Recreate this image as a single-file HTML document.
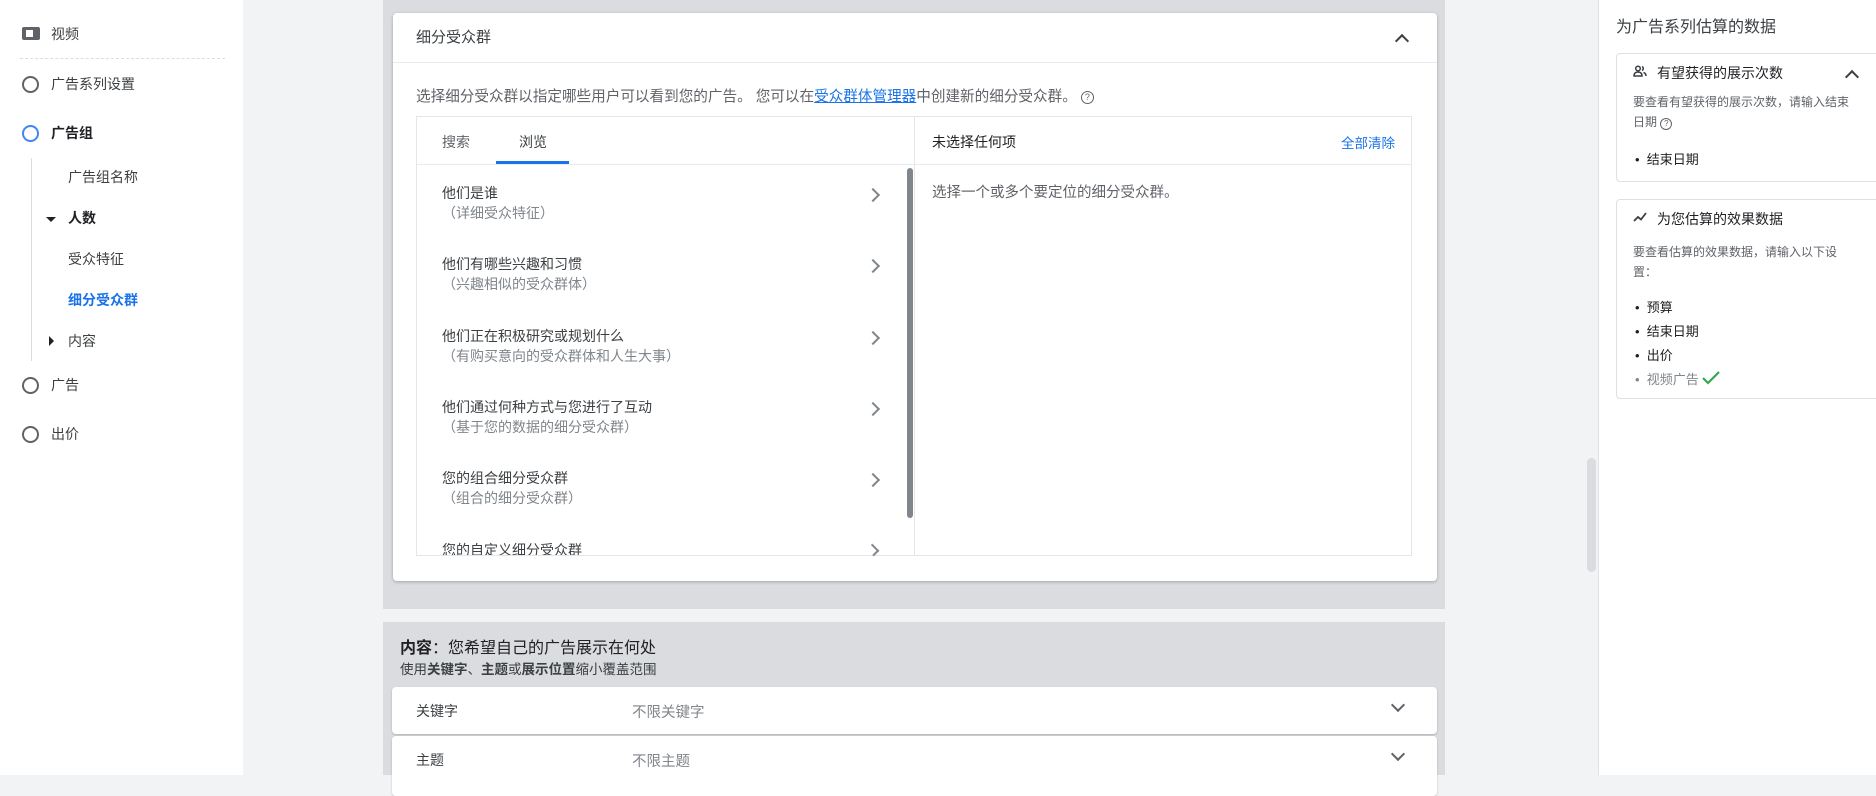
<!DOCTYPE html>
<html><head><meta charset="utf-8">
<style>
*{box-sizing:border-box;margin:0;padding:0}
body{width:1876px;height:775px;overflow:hidden;position:relative;background:#f1f3f4;font-family:"Liberation Sans","Noto Sans CJK SC",sans-serif;color:#3c4043;font-size:14px}
.a{position:absolute;white-space:nowrap}
.nav{left:0;top:0;width:243px;height:775px;background:#fff}
.circ{position:absolute;width:17px;height:17px;border:2px solid #5f6368;border-radius:50%}
.main{left:383px;top:0;width:1062px;height:609px;background:#dadce0}
.card{left:393px;top:13px;width:1044px;height:568px;background:#fff;border-radius:4px;box-shadow:0 1px 3px rgba(0,0,0,.25)}
.box{left:416px;top:116px;width:996px;height:440px;border:1px solid #e6e6e6}
.chev{position:absolute;width:10px;height:10px;border-right:2px solid #80868b;border-top:2px solid #80868b;transform:rotate(45deg)}
.t{color:#3c4043;font-size:14px}
.s{color:#80868b;font-size:14px}
.rp{left:1598px;top:0;width:278px;height:775px;background:#fff;border-left:1px solid #e0e0e0}
.rc{position:absolute;left:17px;width:270px;border:1px solid #e0e0e0;border-radius:4px}
.row{left:392px;width:1045px;height:47px;background:#fff;border-radius:4px;box-shadow:0 1px 2px rgba(0,0,0,.2)}
.dn{position:absolute;width:10px;height:10px;border-right:2px solid #5f6368;border-bottom:2px solid #5f6368;transform:rotate(45deg)}
</style></head><body>
<div class="a nav">
  <div class="a" style="left:22px;top:27px;width:18px;height:13px;background:#5f6368;border-radius:2px"><div style="position:absolute;left:4px;top:3px;width:7px;height:7px;background:#fff"></div></div>
  <div class="a" style="left:51px;top:24px;font-size:14px">视频</div>
  <div class="a" style="left:20px;top:58px;width:205px;border-top:1px dashed #dadce0"></div>
  <div class="circ" style="left:22px;top:76px"></div><div class="a" style="left:51px;top:74px">广告系列设置</div>
  <div class="circ" style="left:22px;top:125px;border-color:#4285f4"></div><div class="a" style="left:51px;top:123px;font-weight:bold;color:#202124">广告组</div>
  <div class="a" style="left:31px;top:158px;width:1px;height:203px;background:#dadce0"></div>
  <div class="a" style="left:68px;top:167px">广告组名称</div>
  <div class="a" style="left:46px;top:217px;border-left:5px solid transparent;border-right:5px solid transparent;border-top:5px solid #202124"></div>
  <div class="a" style="left:68px;top:208px;font-weight:bold;color:#202124">人数</div>
  <div class="a" style="left:68px;top:249px">受众特征</div>
  <div class="a" style="left:68px;top:290px;font-weight:bold;color:#1a73e8">细分受众群</div>
  <div class="a" style="left:49px;top:336px;border-top:5px solid transparent;border-bottom:5px solid transparent;border-left:5px solid #202124"></div>
  <div class="a" style="left:68px;top:331px">内容</div>
  <div class="circ" style="left:22px;top:377px"></div><div class="a" style="left:51px;top:375px">广告</div>
  <div class="circ" style="left:22px;top:426px"></div><div class="a" style="left:51px;top:424px">出价</div>
</div>
<div class="a main"></div>
<div class="a card">
  <div class="a" style="left:23px;top:13px;font-size:15px">细分受众群</div>
  <div class="chev" style="left:1004px;top:23px;transform:rotate(-45deg);border-color:#3c4043"></div>
  <div class="a" style="left:0;top:49px;width:1044px;border-top:1px solid #e8eaed"></div>
  <div class="a" style="left:23px;top:72px;font-size:14.6px;color:#5f6368">选择细分受众群以指定哪些用户可以看到您的广告。 您可以在<span style="color:#1a73e8;text-decoration:underline">受众群体管理器</span>中创建新的细分受众群。 <span style="display:inline-block;width:13px;height:13px;border:1.5px solid #5f6368;border-radius:50%;font-size:9px;text-align:center;line-height:10px;vertical-align:middle">?</span></div>
</div>
<div class="a box">
  <div class="a" style="left:0;top:47px;width:994px;border-top:1px solid #e8eaed"></div>
  <div class="a" style="left:497px;top:0;width:1px;height:438px;background:#e6e6e6"></div>
  <div class="a" style="left:25px;top:15px;color:#5f6368">搜索</div>
  <div class="a" style="left:102px;top:15px;color:#3c4043">浏览</div>
  <div class="a" style="left:79px;top:44px;width:73px;height:3px;background:#1a73e8"></div>
  <div class="a" style="left:490px;top:51px;width:6px;height:350px;background:#80868b;border-radius:3px"></div>
  <div class="a t" style="left:25px;top:66px">他们是谁</div><div class="a s" style="left:25px;top:86px">（详细受众特征）</div><div class="chev" style="left:451px;top:73px"></div>
  <div class="a t" style="left:25px;top:137px">他们有哪些兴趣和习惯</div><div class="a s" style="left:25px;top:157px">（兴趣相似的受众群体）</div><div class="chev" style="left:451px;top:144px"></div>
  <div class="a t" style="left:25px;top:209px">他们正在积极研究或规划什么</div><div class="a s" style="left:25px;top:229px">（有购买意向的受众群体和人生大事）</div><div class="chev" style="left:451px;top:216px"></div>
  <div class="a t" style="left:25px;top:280px">他们通过何种方式与您进行了互动</div><div class="a s" style="left:25px;top:300px">（基于您的数据的细分受众群）</div><div class="chev" style="left:451px;top:287px"></div>
  <div class="a t" style="left:25px;top:351px">您的组合细分受众群</div><div class="a s" style="left:25px;top:371px">（组合的细分受众群）</div><div class="chev" style="left:451px;top:358px"></div>
  <div class="a t" style="left:25px;top:423px;height:15px;overflow:hidden">您的自定义细分受众群</div><div class="chev" style="left:451px;top:429px;height:8px"></div>
  <div class="a" style="left:515px;top:15px;color:#202124">未选择任何项</div>
  <div class="a" style="left:924px;top:15px;color:#1a73e8;font-size:13.5px">全部清除</div>
  <div class="a" style="left:515px;top:64px;color:#5f6368;font-size:14.5px">选择一个或多个要定位的细分受众群。</div>
</div>
<div class="a" style="left:383px;top:622px;width:1062px;height:153px;background:#dadce0"></div>
<div class="a" style="left:400px;top:634px;font-size:16px;color:#202124"><b>内容</b>：您希望自己的广告展示在何处</div>
<div class="a" style="left:400px;top:658px;font-size:13.5px;color:#3c4043">使用<b>关键字</b>、<b>主题</b>或<b>展示位置</b>缩小覆盖范围</div>
<div class="a row" style="top:687px"><div class="a" style="left:24px;top:14px">关键字</div><div class="a" style="left:240px;top:14px;color:#80868b;font-size:14.5px">不限关键字</div><div class="dn" style="left:1001px;top:13px"></div></div>
<div class="a row" style="top:736px;height:60px"><div class="a" style="left:24px;top:14px">主题</div><div class="a" style="left:240px;top:14px;color:#80868b;font-size:14.5px">不限主题</div><div class="dn" style="left:1001px;top:13px"></div></div>
<div class="a" style="left:1587px;top:458px;width:9px;height:114px;background:#dadce0;border-radius:5px"></div>
<div class="a rp">
  <div class="a" style="left:17px;top:13px;font-size:16px;color:#3c4043">为广告系列估算的数据</div>
  <div class="rc" style="top:53px;height:129px">
    <svg class="a" style="left:16px;top:11px" width="14" height="12" viewBox="0 0 14 12"><circle cx="5" cy="3.5" r="2.3" fill="none" stroke="#3c4043" stroke-width="1.5"/><path d="M1 11c0-3 2-4 4-4s4 1 4 4z" fill="none" stroke="#3c4043" stroke-width="1.5"/><path d="M9 1.5a2.2 2.2 0 0 1 0 4M10.5 7.5c1.5.5 2.5 1.5 2.5 3.5" fill="none" stroke="#3c4043" stroke-width="1.5"/></svg>
    <div class="a" style="left:40px;top:9px;font-size:14px;color:#202124">有望获得的展示次数</div>
    <div class="chev" style="left:230px;top:18px;transform:rotate(-45deg);border-color:#3c4043"></div>
    <div class="a" style="left:16px;top:38px;font-size:12px;color:#5f6368;line-height:20px;white-space:normal;width:222px">要查看有望获得的展示次数，请输入结束日期 <span style="display:inline-block;width:12px;height:12px;border:1.2px solid #5f6368;border-radius:50%;font-size:8px;text-align:center;line-height:10px">?</span></div>
    <div class="a" style="left:18px;top:95px;font-size:13px;color:#202124">•&nbsp; 结束日期</div>
  </div>
  <div class="rc" style="top:199px;height:200px">
    <svg class="a" style="left:16px;top:12px" width="14" height="10" viewBox="0 0 14 10"><path d="M1 9l4-4 3 2.5L13 1" fill="none" stroke="#3c4043" stroke-width="1.8"/></svg>
    <div class="a" style="left:40px;top:9px;font-size:14px;color:#202124">为您估算的效果数据</div>
    <div class="a" style="left:16px;top:42px;font-size:12px;color:#5f6368;line-height:20px;white-space:normal;width:225px">要查看估算的效果数据，请输入以下设置：</div>
    <div class="a" style="left:18px;top:96px;font-size:13px;color:#202124;line-height:24px">•&nbsp; 预算<br>•&nbsp; 结束日期<br>•&nbsp; 出价<br><span style="color:#80868b">•&nbsp; 视频广告 <svg width="18" height="14" viewBox="0 0 18 14" style="vertical-align:-1px"><path d="M1 7l5 5L17 1" fill="none" stroke="#34a853" stroke-width="2.2"/></svg></span></div>
  </div>
</div>
</body></html>
